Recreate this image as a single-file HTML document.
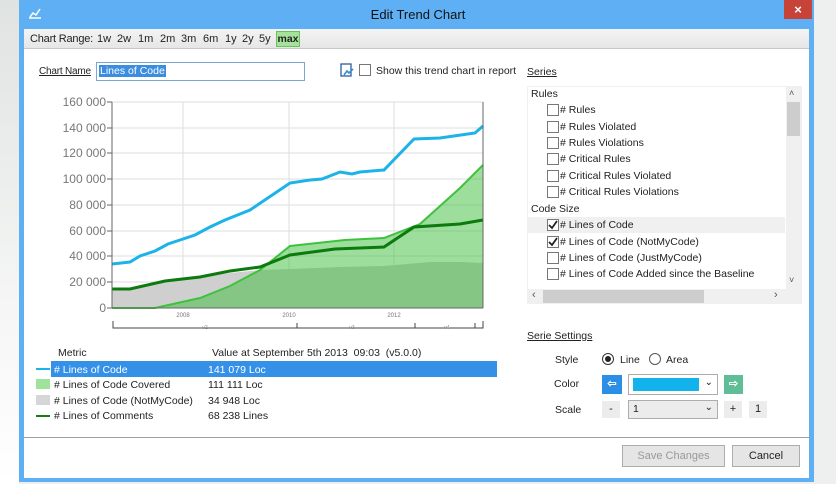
<!DOCTYPE html>
<html><head><meta charset="utf-8"><style>
*{box-sizing:border-box;margin:0;padding:0}
body{width:836px;height:484px;overflow:hidden;background:#eef0ef;font-family:"Liberation Sans",sans-serif;font-size:11px;color:#222;position:relative}
.abs{position:absolute}
.win{left:19px;top:0;width:795px;height:482px;background:#5eaff3}
.client{left:24px;top:29px;width:785px;height:449px;background:#fff}
.tb{left:24px;top:29px;width:785px;height:20px;background:linear-gradient(#f4f4f4,#e6e6e6);border-bottom:1px solid #c8c8c8}
u{text-decoration:underline}
.cb{display:inline-block;width:12px;height:12px;border:1px solid #777;background:#fff;vertical-align:middle;margin-right:1px;position:relative}
.row{position:absolute;left:547px;height:16px;line-height:16px;font-size:10.5px;white-space:nowrap}
.btn{border:1px solid #adadad;background:#e5e5e5;text-align:center;line-height:20px;font-size:11px}
.r{position:absolute;top:33px;font-size:11px}
</style></head><body>
<div class="abs" style="left:0;top:0;width:19px;height:484px;background:linear-gradient(#dfe3e1,#f4f5f4 60%,#fff)"></div>
<div class="abs win"></div>
<svg class="abs" style="left:28px;top:6px" width="14" height="14" viewBox="0 0 14 14"><path d="M1 12h12M2 11l3-4 3 2 4-6" stroke="#fff" stroke-width="1.5" fill="none"/></svg>
<div class="abs" style="left:0;width:836px;top:7px;text-align:center;font-size:13px;color:#111">Edit Trend Chart</div>
<div class="abs" style="left:784px;top:0;width:28px;height:19px;background:#c7433a;color:#fff;text-align:center;line-height:19px;font-size:13px;font-weight:bold">×</div>
<div class="abs client"></div>
<div class="abs tb"></div>
<div class="r" style="left:30px;letter-spacing:-0.2px">Chart Range:</div>
<div class="r" style="left:97px">1w</div><div class="r" style="left:117px">2w</div><div class="r" style="left:138px">1m</div><div class="r" style="left:160px">2m</div><div class="r" style="left:181px">3m</div><div class="r" style="left:203px">6m</div><div class="r" style="left:225px">1y</div><div class="r" style="left:242px">2y</div><div class="r" style="left:259px">5y</div>
<div class="abs" style="left:276px;top:31px;width:24px;height:16px;background:#a6e39a;border:1px solid #6bc15f;font-weight:bold;font-size:10.5px;text-align:center;line-height:14px">max</div>
<div class="abs" style="left:39px;top:66px;font-size:10px;letter-spacing:-0.2px"><u>Chart Name</u></div>
<div class="abs" style="left:96px;top:62px;width:209px;height:19px;border:1px solid #7aa7d8;background:#fff"><span style="position:absolute;left:2px;top:2px;background:#3b8de0;color:#fff;font-size:10.5px;padding:0 1px">Lines of Code</span></div>
<svg class="abs" style="left:340px;top:63px" width="15" height="15"><rect x="1" y="1" width="10" height="12" fill="none" stroke="#2b5f9a" stroke-width="1.3"/><path d="M4 12l3-4 2 2 4-4" stroke="#2a8fe0" stroke-width="1.6" fill="none"/></svg>
<div class="abs" style="left:359px;top:64px"><span class="cb"></span></div>
<div class="abs" style="left:376px;top:65px;font-size:10.5px">Show this trend chart in report</div>

<svg class="abs" style="left:30px;top:90px" width="470" height="250" font-family="Liberation Sans" >
<g transform="translate(-30,-90)">
<g stroke="#dedede" stroke-width="1">
<line x1="112" x2="483" y1="102" y2="102"/><line x1="112" x2="483" y1="128" y2="128"/><line x1="112" x2="483" y1="153" y2="153"/><line x1="112" x2="483" y1="179" y2="179"/><line x1="112" x2="483" y1="205" y2="205"/><line x1="112" x2="483" y1="231" y2="231"/><line x1="112" x2="483" y1="256" y2="256"/><line x1="112" x2="483" y1="282" y2="282"/>
<line x1="183" x2="183" y1="102" y2="308"/><line x1="289" x2="289" y1="102" y2="308"/><line x1="394" x2="394" y1="102" y2="308"/>
</g>
<path d="M112 290 L130 289 L165 282 L200 277 L230 273 L260 270 L290 269 L340 267 L384 266 L430 262 L460 262 L483 263 L483 308 L112 308Z" fill="#cfcfcf"/>
<path d="M155 308 L200 298 L230 286 L260 270 L290 246 L345 240 L384 238 L420 224 L460 188 L483 165 L483 308Z" fill="rgba(60,190,60,0.5)"/>
<path d="M112 308 L155 308 L200 298 L230 286 L260 270 L290 246 L345 240 L384 238 L420 224 L460 188 L483 165" fill="none" stroke="#3ec23e" stroke-width="2"/>
<path d="M112 289 L130 289 L165 281 L200 277 L230 271 L260 267 L290 255 L335 249 L384 247 L414 227 L460 224 L483 220" fill="none" stroke="#0d7a0d" stroke-width="3"/>
<path d="M112 264 L130 262 L140 256 L155 251 L168 244 L180 240 L195 235 L210 227 L225 220 L250 210 L290 183 L310 180 L322 179 L340 172 L352 174 L360 172 L384 170 L414 139 L440 138 L475 133 L483 126" fill="none" stroke="#1cb3e8" stroke-width="3"/>
<line x1="112" x2="112" y1="102" y2="308" stroke="#666"/><line x1="483" x2="483" y1="102" y2="308" stroke="#666"/>
<line x1="112" x2="483" y1="308" y2="308" stroke="#666"/>
<g font-size="12" fill="#777" text-anchor="end">
<text x="106" y="106">160 000</text><text x="106" y="132">140 000</text><text x="106" y="157">120 000</text><text x="106" y="183">100 000</text><text x="106" y="209">80 000</text><text x="106" y="235">60 000</text><text x="106" y="260">40 000</text><text x="106" y="286">20 000</text><text x="106" y="312">0</text>
</g>
<g stroke="#666"><line x1="107" x2="112" y1="102" y2="102"/><line x1="107" x2="112" y1="128" y2="128"/><line x1="107" x2="112" y1="153" y2="153"/><line x1="107" x2="112" y1="179" y2="179"/><line x1="107" x2="112" y1="205" y2="205"/><line x1="107" x2="112" y1="231" y2="231"/><line x1="107" x2="112" y1="256" y2="256"/><line x1="107" x2="112" y1="282" y2="282"/><line x1="107" x2="112" y1="308" y2="308"/></g>
<g font-size="6" fill="#777" text-anchor="middle"><text x="183" y="317">2008</text><text x="289" y="317">2010</text><text x="394" y="317">2012</text></g>
<path d="M113 321v7h370v-7M297 323v5M415 323v5M475 323v5" stroke="#444" fill="none"/>
<g font-size="5" fill="#888" text-anchor="middle"><text x="205" y="329">v2</text><text x="352" y="329">v3</text><text x="447" y="329">v4</text></g>
</g></svg>

<div class="abs" style="left:58px;top:347px;font-size:10.5px">Metric</div>
<div class="abs" style="left:212px;top:347px;font-size:10.5px">Value at September 5th 2013&nbsp; 09:03&nbsp; (v5.0.0)</div>
<div class="abs" style="left:51px;top:361px;width:446px;height:16px;background:#3591e8"></div>
<div class="abs" style="left:36px;top:368px;width:14px;height:2px;background:#1cb3e8"></div>
<div class="abs" style="left:36px;top:379px;width:14px;height:10px;background:#9fe29b"></div>
<div class="abs" style="left:36px;top:395px;width:14px;height:10px;background:#d6d6d6"></div>
<div class="abs" style="left:36px;top:415px;width:14px;height:2px;background:#137f13"></div>
<div class="abs" style="left:54px;top:363px;font-size:10.5px;color:#fff;line-height:15.7px"># Lines of Code</div>
<div class="abs" style="left:54px;top:378px;font-size:10.5px;line-height:15.7px"># Lines of Code Covered<br># Lines of Code (NotMyCode)<br># Lines of Comments</div>
<div class="abs" style="left:208px;top:363px;font-size:10.5px;color:#fff;line-height:15.7px">141 079 Loc</div>
<div class="abs" style="left:208px;top:378px;font-size:10.5px;line-height:15.7px">111 111 Loc<br>34 948 Loc<br>68 238 Lines</div>

<div class="abs" style="left:527px;top:66px;font-size:10.5px"><u>Series</u></div>
<div class="abs" style="left:527px;top:86px;width:275px;height:218px;background:#fff;border:1px solid #f0f0f0"></div>
<div class="abs" style="left:786px;top:87px;width:15px;height:202px;background:#f0f0f0"></div>
<div class="abs" style="left:787px;top:102px;width:13px;height:34px;background:#cdcdcd"></div>
<div class="abs" style="left:528px;top:289px;width:273px;height:15px;background:#f0f0f0"></div>
<div class="abs" style="left:543px;top:290px;width:161px;height:13px;background:#cdcdcd"></div>
<div class="abs" style="left:789px;top:88px;font-size:9px;color:#555">˄</div>
<div class="abs" style="left:789px;top:275px;font-size:9px;color:#555">˅</div>
<div class="abs" style="left:532px;top:289px;font-size:11px;color:#555">‹</div>
<div class="abs" style="left:774px;top:289px;font-size:11px;color:#555">›</div>
<div class="abs" style="left:528px;top:217px;width:257px;height:16px;background:#f0f0f0"></div>
<div class="row" style="left:531px;top:86px">Rules</div>
<div class="row" style="top:102px"><span class="cb"></span># Rules</div>
<div class="row" style="top:119px"><span class="cb"></span># Rules Violated</div>
<div class="row" style="top:135px"><span class="cb"></span># Rules Violations</div>
<div class="row" style="top:151px"><span class="cb"></span># Critical Rules</div>
<div class="row" style="top:168px"><span class="cb"></span># Critical Rules Violated</div>
<div class="row" style="top:184px"><span class="cb"></span># Critical Rules Violations</div>
<div class="row" style="left:531px;top:201px">Code Size</div>
<div class="row" style="top:217px"><span class="cb"><svg style="position:absolute;left:0;top:0" width="10" height="10"><path d="M1 5l3 3 5-7" stroke="#222" stroke-width="1.8" fill="none"/></svg></span># Lines of Code</div>
<div class="row" style="top:234px"><span class="cb"><svg style="position:absolute;left:0;top:0" width="10" height="10"><path d="M1 5l3 3 5-7" stroke="#222" stroke-width="1.8" fill="none"/></svg></span># Lines of Code (NotMyCode)</div>
<div class="row" style="top:250px"><span class="cb"></span># Lines of Code (JustMyCode)</div>
<div class="row" style="top:266px"><span class="cb"></span># Lines of Code Added since the Baseline</div>

<div class="abs" style="left:527px;top:330px;font-size:10.5px"><u>Serie Settings</u></div>
<div class="abs" style="left:555px;top:354px;font-size:10.5px">Style</div>
<div class="abs" style="left:602px;top:353px;width:12px;height:12px;border:1px solid #333;border-radius:50%;background:#fff"><div style="margin:2px;width:6px;height:6px;border-radius:50%;background:#222"></div></div>
<div class="abs" style="left:620px;top:354px;font-size:10.5px">Line</div>
<div class="abs" style="left:649px;top:353px;width:12px;height:12px;border:1px solid #555;border-radius:50%;background:#fff"></div>
<div class="abs" style="left:666px;top:354px;font-size:10.5px">Area</div>
<div class="abs" style="left:554px;top:378px;font-size:10.5px">Color</div>
<div class="abs" style="left:602px;top:375px;width:20px;height:19px;background:#2b8fe6;color:#fff;text-align:center;font-weight:bold;line-height:19px">⇦</div>
<div class="abs" style="left:628px;top:374px;width:90px;height:21px;border:1px solid #adadad;background:#fff"><div style="position:absolute;left:4px;top:3px;width:66px;height:13px;background:#12b3ec"></div><span style="position:absolute;right:4px;top:2px;font-size:10px">⌄</span></div>
<div class="abs" style="left:724px;top:375px;width:19px;height:19px;background:#5fbe98;color:#fff;text-align:center;font-weight:bold;line-height:19px">⇨</div>
<div class="abs" style="left:555px;top:404px;font-size:10.5px">Scale</div>
<div class="abs" style="left:602px;top:401px;width:18px;height:17px;background:#ececec;text-align:center;line-height:17px">-</div>
<div class="abs" style="left:628px;top:400px;width:90px;height:19px;border:1px solid #adadad;background:#ececec"><span style="position:absolute;left:4px;top:2px;font-size:10.5px">1</span><span style="position:absolute;right:4px;top:1px;font-size:10px">⌄</span></div>
<div class="abs" style="left:724px;top:401px;width:18px;height:17px;background:#ececec;text-align:center;line-height:17px">+</div>
<div class="abs" style="left:749px;top:401px;width:18px;height:17px;background:#ececec;text-align:center;line-height:17px">1</div>
<div class="abs" style="left:24px;top:437px;width:785px;height:1px;background:#a0a0a0"></div>
<div class="abs btn" style="left:622px;top:445px;width:103px;height:22px;color:#999">Save Changes</div>
<div class="abs btn" style="left:732px;top:445px;width:68px;height:22px">Cancel</div>
</body></html>
